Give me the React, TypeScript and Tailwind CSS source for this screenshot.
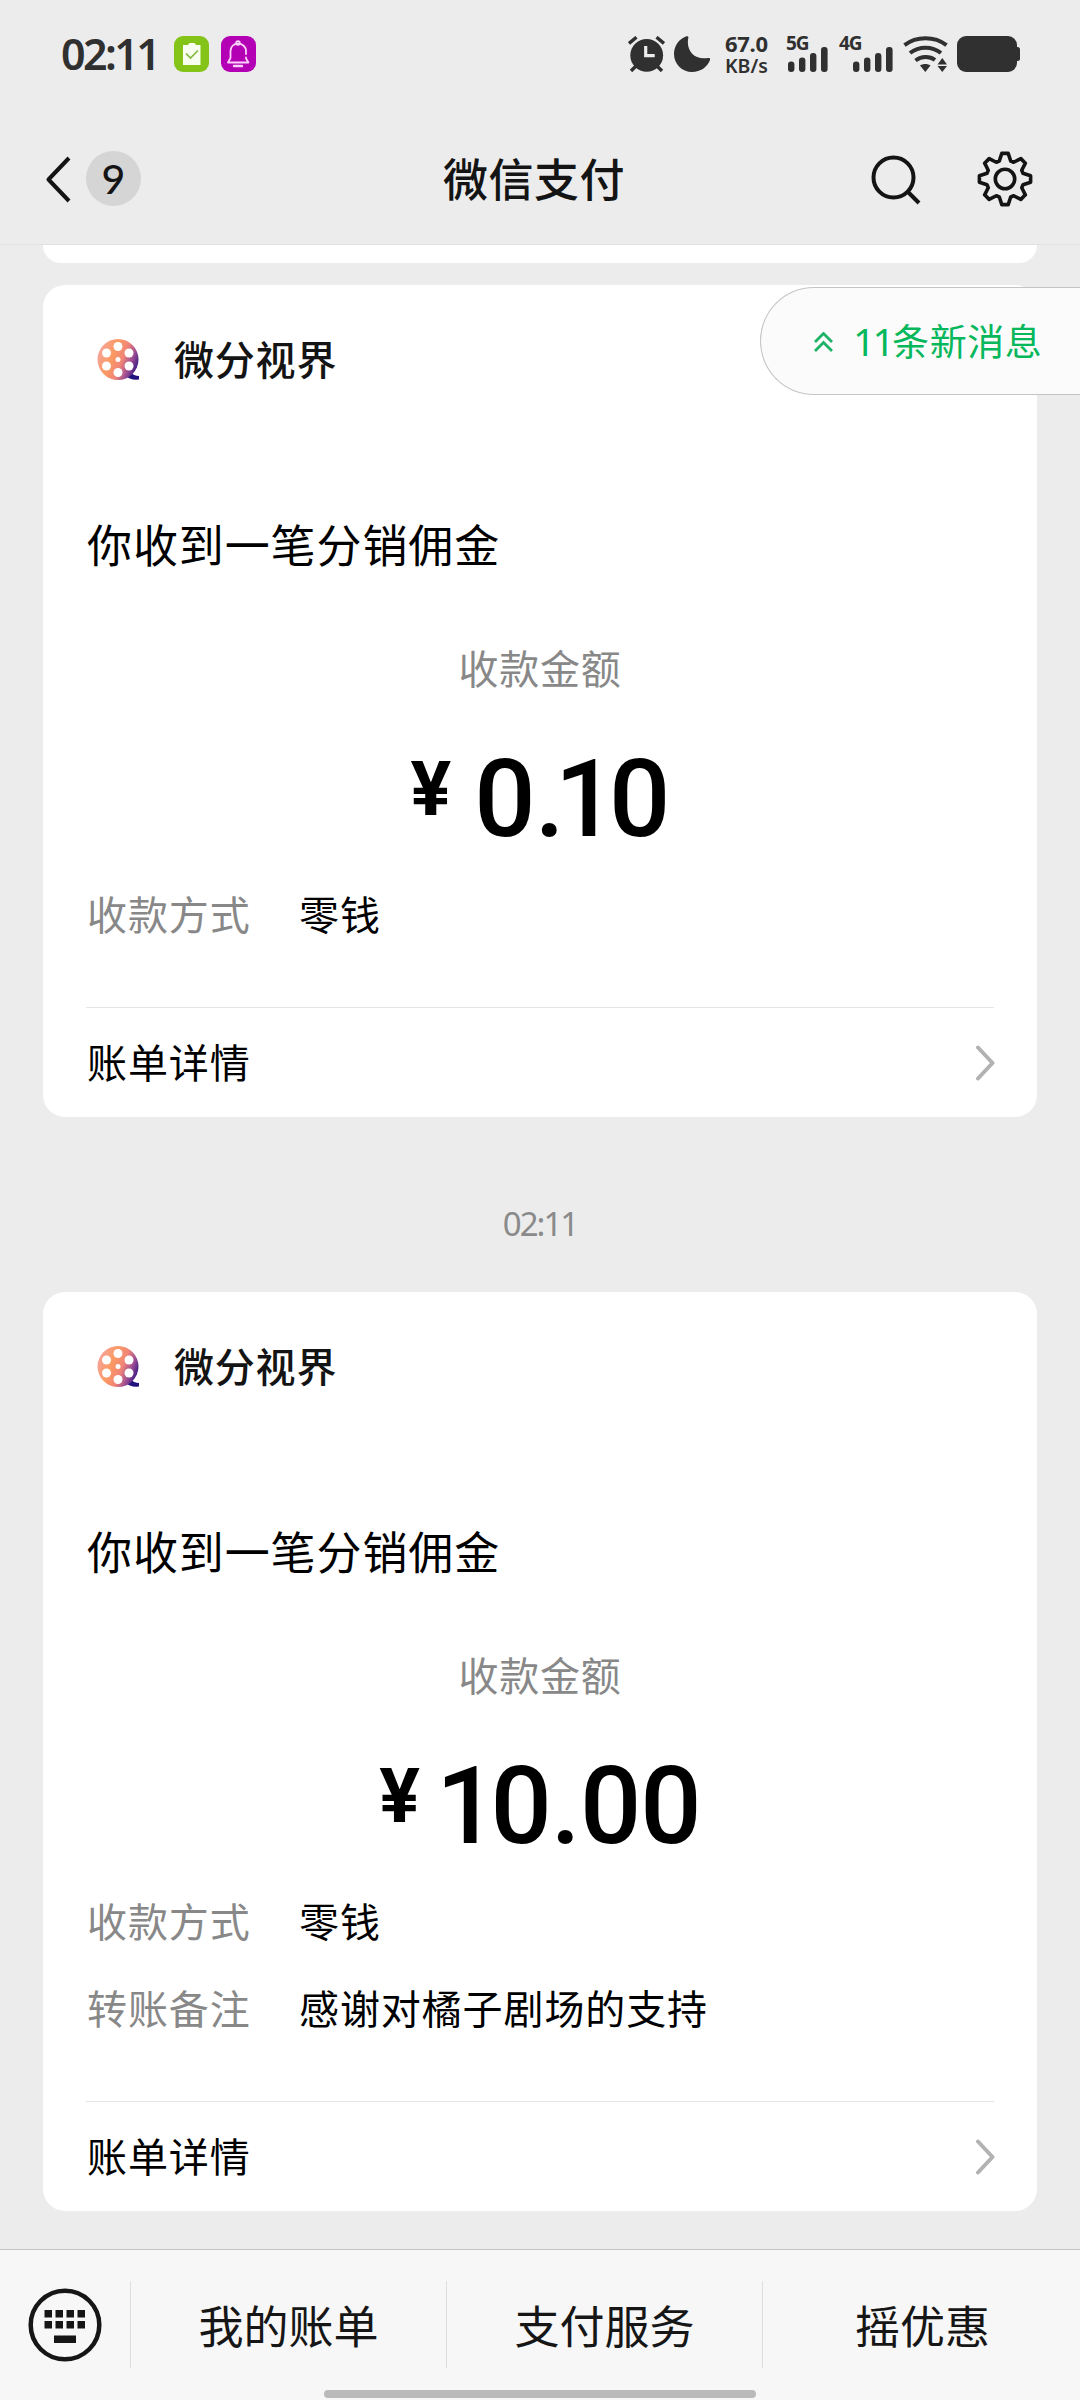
import { useId } from "react";

interface IRow {
    label: string
    value: string
}

interface IPayCardProps {
    amount: string
    rows: IRow[]
}

const tabs = ["我的账单", "支付服务", "摇优惠"];

const SignalBars = () => (
    <svg width="40" height="25" viewBox="0 0 40 25" fill="#303030">
        <rect x="0" y="14.5" width="6.4" height="10.5" rx="3" />
        <rect x="11" y="10.5" width="6.4" height="14.5" rx="3" />
        <rect x="22" y="6" width="6.4" height="19" rx="3" />
        <rect x="33" y="0" width="6.6" height="25" rx="3" />
    </svg>
)

const StatusBar = () => (
    <div className="flex h-[108px] items-start pl-[60px] pt-9 text-[#303030]">
        <span className="w-[114px] whitespace-nowrap pl-px font-['Noto_Sans',sans-serif] text-[43px] font-semibold leading-9 tracking-[-2.6px]">02:11</span>
        <svg width="35" height="36" viewBox="0 0 35 36">
            <rect width="35" height="36" rx="9" fill="#84c318" />
            <path d="M9 9h5l1.500-2h5l1.500 2h4.500v20H9z" fill="#f8fff0" />
            <path d="M12 17.500l4.500 4.500 7.500-7.500" fill="none" stroke="#84b83a" strokeWidth="1.700" />
        </svg>
        <svg className="ml-3" width="35" height="36" viewBox="0 0 35 36">
            <rect width="35" height="36" rx="9" fill="#b400b4" />
            <g fill="none" stroke="#fbd0fb" strokeWidth="1.800" strokeLinecap="round" strokeLinejoin="round">
                <circle cx="17" cy="7" r="1.800" />
                <path d="M9.500 22v-7c0-4 3-7.500 7.500-7.500s8 3.500 8 7.500v3M25 21.500v1l2.500 4H7l2.500-4.500" />
                <path d="M13 30h8" strokeWidth="2.400" />
            </g>
        </svg>

        <svg className="ml-[372px]" width="37" height="36" viewBox="0 0 37 36">
            <circle cx="18.700" cy="19.300" r="16.400" fill="#303030" />
            <g fill="none" stroke="#303030" strokeWidth="3.400">
                <path d="M1 7.500L8.500 1.200M36 7.500L28.500 1.200M3 35l5-5M34 35l-5-5" />
            </g>
            <path d="M17.700 10v9.700h9" fill="none" stroke="#ececec" strokeWidth="3.200" />
        </svg>
        <svg className="ml-[9px]" width="37" height="36" viewBox="0 0 37 36" fill="#303030">
            <path d="M12.500.3c1.300-.5 2.200.4 1.800 1.700C11.800 14 20 24.500 34 22c1.700-.3 2.500.6 2 2C33.500 31 26.500 36 18 36 8 36 0 28 0 18 0 10 5 2.800 12.500.3z" />
        </svg>
        <div className="-mt-1 ml-[14px] flex w-[61px] flex-col gap-[3px] font-['Noto_Sans',sans-serif]">
            <div className="text-[22px] font-bold leading-[23px] tracking-[-0.3px]">67.0</div>
            <div className="text-[19.5px] font-semibold leading-[16px]">KB/s</div>
        </div>
        <div className="relative h-9 w-[42px]">
            <span className="absolute left-0 top-0 font-['Noto_Sans',sans-serif] text-[19px] font-bold leading-[14px] tracking-[-1px]">5G</span>
            <div className="pl-0.5 pt-[11px]"><SignalBars /></div>
        </div>
        <div className="relative ml-[11px] h-9 w-[54px]">
            <span className="absolute left-0 top-0 font-['Noto_Sans',sans-serif] text-[19px] font-bold leading-[14px] tracking-[-1px]">4G</span>
            <div className="pl-3.5 pt-[11px]"><SignalBars /></div>
        </div>
        <svg className="ml-2.5" width="45" height="36" viewBox="0 0 45 36">
            <g fill="none" stroke="#303030" strokeWidth="4">
                <path d="M1.500 9.200c12-9.200 30-9.200 42 0" />
                <path d="M7 17c9-7 22-7 31 0" />
                <path d="M12.500 24.500c6-4.500 14-4.500 19.500-.5" />
            </g>
            <path d="M17 29.500c3-2 7.500-2 10.500 0L22.300 36zM34.500 28.500h9.500l-4.700-6.500zM34.500 30h9.500l-4.700 6z" fill="#303030" />
        </svg>
        <svg className="ml-[9px]" width="64" height="36" viewBox="0 0 64 36" fill="#303030">
            <rect width="60" height="36" rx="9" />
            <path d="M59 11h1.500a2.500 2.500 0 0 1 2.500 2.500v9a2.500 2.500 0 0 1-2.500 2.500H59z" />
        </svg>
    </div>
)

// one tooth, turned round the centre eight times
const tooth = [[-5.7, -18], [-3.2, -25.6], [3.2, -25.6], [5.7, -18]];
const gearPoints = Array.from({ length: 8 }, (_, i) => {
    const a = (i * Math.PI) / 4;
    return tooth.map(([x, y]) => `${(x * Math.cos(a) - y * Math.sin(a)).toFixed(2)},${(x * Math.sin(a) + y * Math.cos(a)).toFixed(2)}`).join(" ");
}).join(" ");

const GearIcon = () => (
    <svg width="56" height="56" viewBox="-28 -28 56 56" fill="none" stroke="#141414" strokeWidth="3.6" strokeLinejoin="round">
        <circle r="9.7" />
        <polygon points={gearPoints} />
    </svg>
)

const Header = () => (
    <header className="flex h-[137px] items-start border-b border-[#e2e2e2] pl-[45px] pt-[43px]">
        <svg className="mt-[5px]" width="26" height="47" viewBox="0 0 26 47" fill="none" stroke="#141414" strokeWidth="4" strokeLinejoin="round">
            <path d="M24 2L3.500 23.500 24 45" />
        </svg>
        <div className="ml-[15px] flex size-[55px] items-center justify-center rounded-full bg-[#d5d5d5] font-['Lato',sans-serif] text-[41px] font-medium text-[#141414]">9</div>
        <h1 className="ml-[302px] w-[182px] whitespace-nowrap text-[45px] font-medium leading-[53px] tracking-[0.5px] text-[#141414]">微信支付</h1>
        <svg className="ml-[245px] mt-0.5" width="52" height="52" viewBox="0 0 52 52" fill="none" stroke="#141414" strokeWidth="4">
            <circle cx="23.500" cy="24.500" r="20" />
            <path d="M37.500 38.500L49 50" />
        </svg>
        <div className="ml-[55px]"><GearIcon /></div>
    </header>
)

const ReelLogo = () => {
    const id = useId();
    const holes = [[21, 8.5], [32, 15], [32, 28], [21, 34.5], [9.5, 28], [9.5, 15]];

    return (
        <svg width="43" height="43" viewBox="0 0 43 43">
            <defs>
                <linearGradient id={id} x1="0" y1="0.3" x2="1" y2="0.7">
                    <stop offset="0" stopColor="#f6a49c" />
                    <stop offset="0.35" stopColor="#fb9a62" />
                    <stop offset="0.6" stopColor="#f08478" />
                    <stop offset="0.8" stopColor="#9c4c94" />
                    <stop offset="1" stopColor="#2c1480" />
                </linearGradient>
            </defs>
            <path d="M33 34q4 4 9 4v3.500q-9 1-14-4z" fill="#22127c" />
            <circle cx="21" cy="21.500" r="20.500" fill={`url(#${id})`} />
            {holes.map(([x, y]) => <circle key={`${x}-${y}`} cx={x} cy={y} r="4.500" fill="#fff" />)}
            <circle cx="21" cy="21.500" r="2.500" fill="#fff" />
        </svg>
    )
}

// the narrow 1 sits closer to both of its neighbours
const digitSpacing = (amount: string, i: number) => {
    if (amount[i] === "1") return "tracking-[-7px]";
    if (amount[i + 1] === "1") return "tracking-[-10px]";
    return "tracking-[-1px]";
}

const PayCard = ({ amount, rows }: IPayCardProps) => {
    return (
        <section className="mx-[43px] rounded-[22px] bg-white px-[43px] text-black">
            <div className="flex h-[149px] items-center pl-[11px]">
                <ReelLogo />
                <span className="ml-[34px] pb-[3px] text-[40px] font-medium leading-[60px] tracking-[0.8px] text-[#141414]">微分视界</span>
            </div>
            <p className="pl-px pt-[80px] text-[45px] leading-[60px] tracking-[0.9px]">你收到一笔分销佣金</p>
            <p className="pt-[63px] text-center text-[40px] leading-[60px] tracking-[0.8px] text-[#888]">收款金额</p>
            <div className="flex h-[164px] items-start justify-center font-['Roboto',sans-serif] font-medium">
                <span className="pt-[54px] text-[76px] font-bold leading-[76px]">¥</span>
                <span className={amount.startsWith("1") ? "ml-4 pt-[48px] text-[108px] leading-[108px]" : "ml-[23px] pt-[48px] text-[108px] leading-[108px]"}>
                    {amount.split("").map((char, i) => (
                        <span key={i} className={digitSpacing(amount, i)}>{char}</span>
                    ))}
                </span>
            </div>
            <div className="pl-px pt-[22px]">
                {rows.map((row) => (
                    <div key={row.label} className="flex h-[87px] items-start text-[40px] leading-[60px] tracking-[0.9px]">
                        <span className="w-[212px] text-[#888]">{row.label}</span>
                        <span>{row.value}</span>
                    </div>
                ))}
            </div>
            <div className="mt-[37px] flex h-[110px] items-center justify-between border-t border-[#e4e4e4] pl-px">
                <span className="pb-[3px] text-[40px] tracking-[0.9px]">账单详情</span>
                <svg className="-mr-px" width="20" height="36" viewBox="0 0 20 36" fill="none" stroke="#b2b2b2" strokeWidth="4" strokeLinecap="round" strokeLinejoin="round">
                    <path d="M3 2.500L17.500 18 3 33.500" />
                </svg>
            </div>
        </section>
    )
}

const NewMessages = () => (
    <div className="absolute right-0 top-[287px] flex h-[108px] w-[320px] items-center rounded-l-full border border-r-0 border-[#c4c4c4] bg-[#fbfbfb] pl-[53px] text-[#07b75b]">
        <svg className="mt-0.5" width="19" height="20" viewBox="0 0 19 20" fill="none" stroke="#1cb368" strokeWidth="2.800">
            <path d="M1 10l8.500-8.500L18 10M1 19l8.500-8.500L18 19" />
        </svg>
        <span className="ml-[20px] whitespace-nowrap text-[37px] tracking-[0.6px]"><span className="font-['Noto_Sans',sans-serif] text-[39px] tracking-[-2.8px]">11</span>条新消息</span>
    </div>
)

const KeyboardIcon = () => (
    <svg width="74" height="74" viewBox="0 0 74 74" fill="#161616">
        <circle cx="37" cy="37" r="34.300" fill="none" stroke="#161616" strokeWidth="4.500" />
        {[16.5, 27.5, 38.5, 49.5].map((x) => (
            <g key={x}>
                <rect x={x} y="22" width="7.500" height="7.500" />
                <rect x={x} y="33" width="7.500" height="7.500" />
            </g>
        ))}
        <rect x="26" y="47.500" width="22" height="7.500" />
    </svg>
)

const BottomBar = () => (
    <footer className="flex h-[151px] flex-col border-t border-[#c4c4c4] bg-[#f7f7f7]">
        <div className="flex pt-[31px]">
            <div className="flex h-[87px] w-[130px] items-center pl-7 pt-px"><KeyboardIcon /></div>
            {tabs.map((tab) => (
                <div key={tab} className="flex h-[87px] flex-1 items-center justify-center border-l border-[#dedede] text-[45px] text-[#161616] last:pl-0.5">{tab}</div>
            ))}
        </div>
        <div className="mx-auto mt-[22px] h-2 w-[432px] rounded-full bg-[#bababa]" />
    </footer>
)

const App = () => {
    return (
        <div className="relative flex h-[2400px] w-[1080px] flex-col overflow-hidden bg-[#ececec] font-['Noto_Sans_CJK_SC',sans-serif]">
            <StatusBar />
            <Header />
            <main className="flex-1">
                <div className="mx-[43px] mb-[22px] h-[18px] rounded-b-[20px] bg-white" />
                <PayCard amount="0.10" rows={[{ label: "收款方式", value: "零钱" }]} />
                <div className="flex h-[175px] items-center justify-center pt-[38px] font-['Noto_Sans',sans-serif] text-[33px] tracking-[-2px] text-[#8a8a8a]">02:11</div>
                <PayCard
                    amount="10.00"
                    rows={[
                        { label: "收款方式", value: "零钱" },
                        { label: "转账备注", value: "感谢对橘子剧场的支持" },
                    ]}
                />
            </main>
            <BottomBar />
            <NewMessages />
        </div>
    )
}

export default App
